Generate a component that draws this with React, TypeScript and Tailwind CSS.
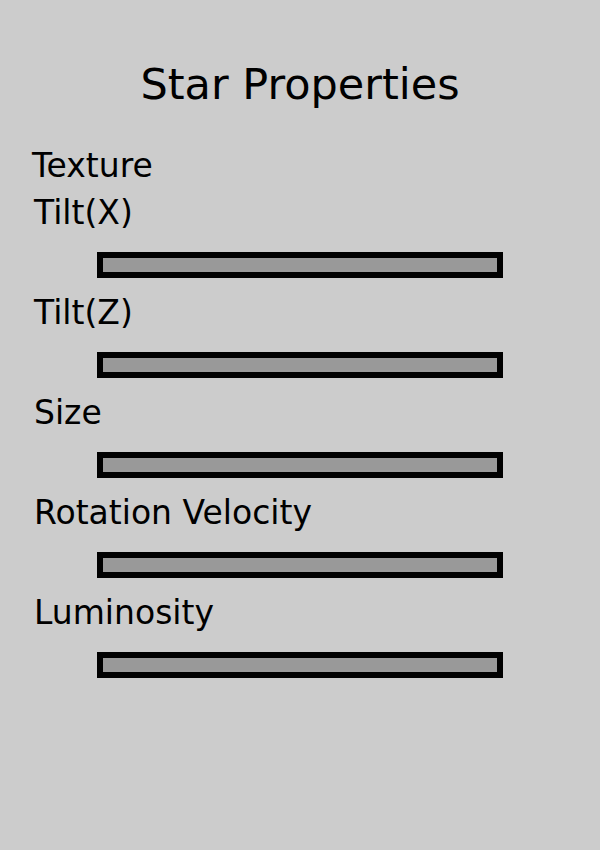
import React from "react";

const sliders = [
  { id: "tilt-x", label: "Tilt(X)" },
  { id: "tilt-z", label: "Tilt(Z)" },
  { id: "size", label: "Size" },
  { id: "rotation-velocity", label: "Rotation Velocity" },
  { id: "luminosity", label: "Luminosity" },
];

export default function App() {
  return (
    <main className="min-h-screen bg-[#cccccc] px-8 pt-14 pb-12 font-[Verdana,'DejaVu_Sans',sans-serif] text-black">
      <h1 className="text-center text-[43px] leading-[56px]">Star Properties</h1>
      <h2 className="mt-8 text-[33px] leading-[44px]">Texture</h2>
      <form>
        {sliders.map((s) => (
          <div key={s.id} className="h-[100px]">
            <label htmlFor={s.id} className="block pb-3.5 pl-0.5 text-[33px] leading-[50px]">
              {s.label}
            </label>
            <div className="px-[65px]">
              <input
                id={s.id}
                type="range"
                className="block h-[26px] w-full appearance-none border-6 border-black bg-[#999999] [&::-webkit-slider-thumb]:invisible"
              />
            </div>
          </div>
        ))}
      </form>
    </main>
  );
}
